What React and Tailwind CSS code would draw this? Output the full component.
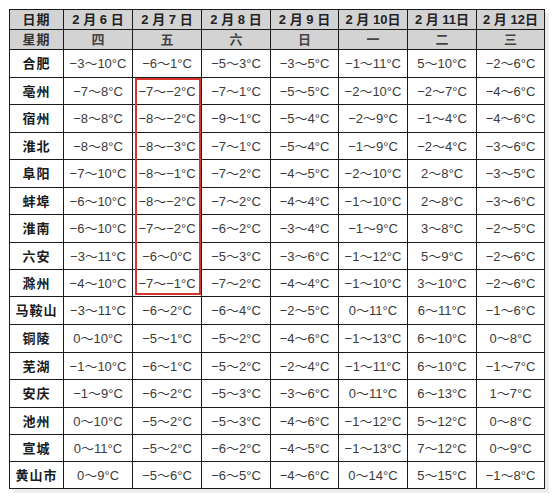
import React from "react";

const dates = ["2 月 6 日", "2 月 7 日", "2 月 8 日", "2 月 9 日", "2 月 10日", "2 月 11日", "2 月 12日"];
const weekdays = ["四", "五", "六", "日", "一", "二", "三"];

const rows = [
  ["合肥", ["-3～10", "-6～1", "-5～3", "-3～5", "-1～11", "5～10", "-2～6"]],
  ["亳州", ["-7～8", "-7～-2", "-7～1", "-5～5", "-2～10", "-2～7", "-4～6"]],
  ["宿州", ["-8～8", "-8～-2", "-9～1", "-5～4", "-2～9", "-1～4", "-4～6"]],
  ["淮北", ["-8～8", "-8～-3", "-7～1", "-5～4", "-1～9", "-2～4", "-3～6"]],
  ["阜阳", ["-7～10", "-8～-1", "-7～2", "-4～5", "-2～10", "2～8", "-3～5"]],
  ["蚌埠", ["-6～10", "-8～-2", "-7～2", "-4～4", "-1～10", "2～8", "-3～6"]],
  ["淮南", ["-6～10", "-7～-2", "-6～2", "-3～4", "-1～9", "3～8", "-2～5"]],
  ["六安", ["-3～11", "-6～0", "-5～3", "-3～6", "-1～12", "5～9", "-2～6"]],
  ["滁州", ["-4～10", "-7～-1", "-7～2", "-4～4", "-1～10", "3～10", "-2～6"]],
  ["马鞍山", ["-3～11", "-6～2", "-6～4", "-2～5", "0～11", "6～11", "-1～6"]],
  ["铜陵", ["0～10", "-5～1", "-5～2", "-4～6", "-1～13", "6～10", "0～8"]],
  ["芜湖", ["-1～10", "-6～1", "-5～2", "-2～4", "-1～11", "6～10", "-1～7"]],
  ["安庆", ["-1～9", "-6～2", "-5～3", "-3～6", "0～11", "6～13", "1～7"]],
  ["池州", ["0～10", "-5～2", "-5～3", "-4～6", "-1～12", "5～12", "0～8"]],
  ["宣城", ["0～11", "-5～2", "-6～2", "-4～5", "-1～13", "7～12", "0～9"]],
  ["黄山市", ["0～9", "-5～6", "-6～5", "-4～6", "0～14", "5～15", "-1～8"]],
];

// row heights picked to land on the grid lines of the picture
const rowH = ["h-[28px]", "h-[27px]", "h-[28px]", "h-[27px]", "h-[28px]", "h-[27px]", "h-[28px]", "h-[27px]", "h-[27px]", "h-[28px]", "h-[28px]", "h-[27px]", "h-[28px]", "h-[27px]", "h-[27px]", "h-[27px]"];
const colW = ["w-[69px]", "w-[69px]", "w-[69px]", "w-[68px]", "w-[69px]", "w-[69px]", "w-[68px]"];

function fmt(s) {
  return s.replace(/-/g, "−") + "°C";
}

export default function App() {
  return (
    <div className="bg-white min-h-screen p-[9px] font-['Liberation_Sans','Noto_Sans_CJK_SC',sans-serif]">
      <div className="relative w-[536px] shadow-[4px_4px_0_#ececec]">
        <table className="border-collapse table-fixed w-[536px]">
          <thead>
            <tr className="h-[20px] bg-[#d3d3d3]">
              <th className="w-[54px] border border-[#1a1a1a] p-0 text-[13px] font-bold text-[#222] tracking-[1px] leading-none">
                日期
              </th>
              {dates.map((d, i) => (
                <th
                  key={d}
                  className={`${colW[i]} border border-[#1a1a1a] p-0 text-[13px] font-bold text-[#222] leading-none whitespace-pre`}
                >
                  {d}
                </th>
              ))}
            </tr>
            <tr className="h-[20px] bg-[#d3d3d3]">
              <th className="border border-[#1a1a1a] p-0 text-[13px] font-bold text-[#333] tracking-[1px] leading-none">
                星期
              </th>
              {weekdays.map((w) => (
                <th
                  key={w}
                  className="border border-[#1a1a1a] p-0 text-[13px] font-bold text-[#444] leading-none"
                >
                  {w}
                </th>
              ))}
            </tr>
          </thead>
          <tbody>
            {rows.map(([city, temps], r) => (
              <tr key={city} className={rowH[r]}>
                <td className="border border-[#1a1a1a] p-0 text-center text-[13px] font-bold text-[#1a1a1a] tracking-[1px] leading-none">
                  {city}
                </td>
                {temps.map((t, i) => (
                  <td
                    key={i}
                    className="border border-[#1a1a1a] p-0 text-center text-[13px] text-[#3a3a3a] leading-none whitespace-nowrap"
                  >
                    {fmt(t)}
                  </td>
                ))}
              </tr>
            ))}
          </tbody>
        </table>

        {/* red highlight over 2月7日 cold days */}
        <div className="absolute left-[126px] top-[69px] w-[66px] h-[217px] border-2 border-[#d8352c] pointer-events-none" />
      </div>
    </div>
  );
}
